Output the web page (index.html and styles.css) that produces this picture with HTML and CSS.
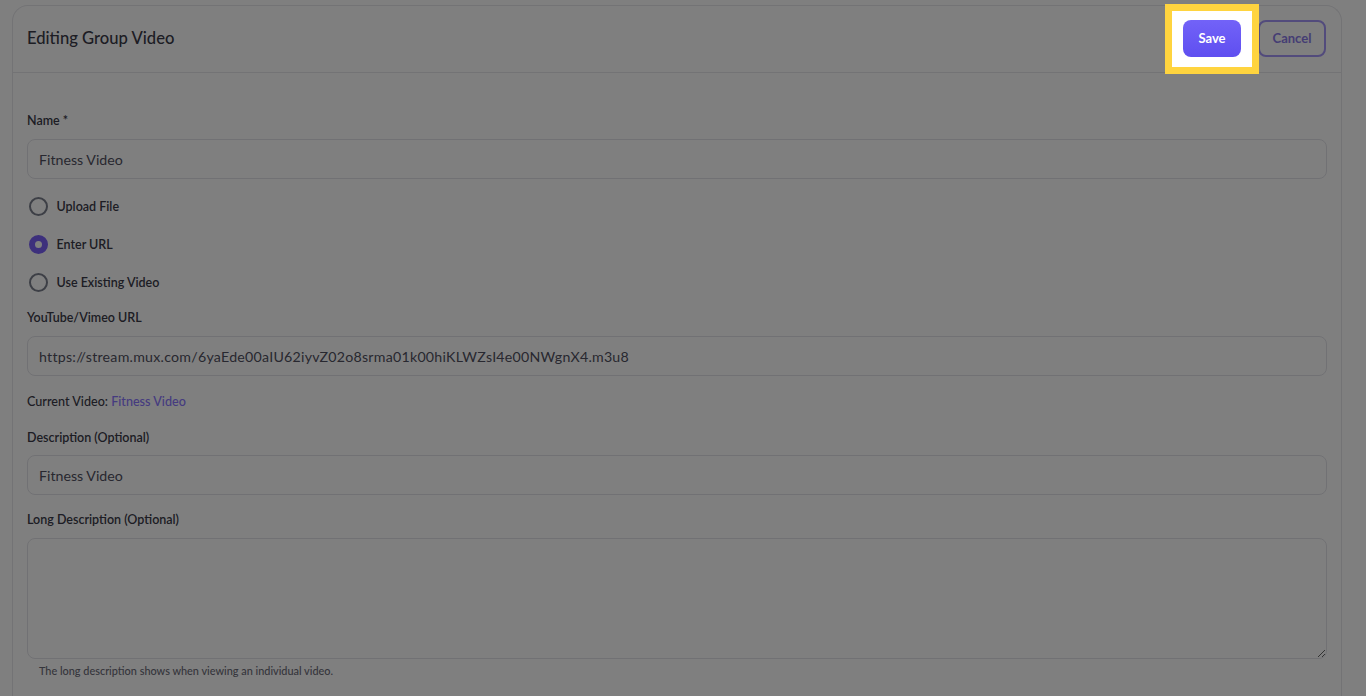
FILE: index.html
```html
<!DOCTYPE html>
<html lang="en">
<head>
<meta charset="utf-8">
<title>Editing Group Video</title>
<link rel="stylesheet" href="styles.css">
</head>
<body>
<div class="page">
  <section class="card">
    <header class="card-header">
      <h1 class="title">Editing Group Video</h1>
      <div class="actions">
        <span class="spotlight"><button class="btn btn-primary" type="button">Save</button></span>
        <button class="btn btn-outline" type="button">Cancel</button>
      </div>
    </header>
    <div class="card-body">
      <div class="field">
        <label class="label">Name *</label>
        <div class="input">Fitness Video</div>
      </div>
      <div class="radios">
        <div class="radio"><span class="dot"></span><span>Upload File</span></div>
        <div class="radio"><span class="dot checked"></span><span>Enter URL</span></div>
        <div class="radio"><span class="dot"></span><span>Use Existing Video</span></div>
      </div>
      <div class="field url-field">
        <label class="label">YouTube/Vimeo URL</label>
        <div class="input">https://stream.mux.com/6yaEde00aIU62iyvZ02o8srma01k00hiKLWZsI4e00NWgnX4.m3u8</div>
      </div>
      <p class="current">Current Video: <a class="link">Fitness Video</a></p>
      <div class="field desc-field">
        <label class="label">Description (Optional)</label>
        <div class="input">Fitness Video</div>
      </div>
      <div class="field long-field">
        <label class="label">Long Description (Optional)</label>
        <textarea class="textarea"></textarea>
        <p class="help">The long description shows when viewing an individual video.</p>
      </div>
    </div>
  </section>
</div>
<div class="dim"></div>
</body>
</html>
```
FILE: styles.css
```css
* { box-sizing: border-box; }
html, body { margin: 0; padding: 0; height: 100%; overflow: hidden; }
body {
  background: #ffffff;
  font-family: "Lato", "Noto Sans", sans-serif;
  color: #3a3a48;
}
.page {
  padding: 5px 24px 0 12px;
}
.card {
  border: 1px solid #e6e6ea;
  border-bottom: none;
  border-radius: 16px 16px 0 0;
  background: #fff;
  height: 720px;
}
.card-header {
  height: 67px;
  display: flex;
  align-items: center;
  justify-content: space-between;
  padding: 0 15px 0 14px;
  border-bottom: 1px solid #e6e6ea;
}
.title {
  margin: 0 0 3px 0;
  font-size: 16.6px;
  font-weight: 500;
  color: #3a3a48;
}
.actions {
  display: flex;
  align-items: center;
  gap: 17px;
  margin-bottom: 2px;
}
.btn {
  font-family: inherit;
  font-size: 13px;
  font-weight: 700;
  height: 37px;
  border-radius: 8px;
  cursor: pointer;
}
.btn-primary {
  width: 58px;
  border: none;
  color: #fff;
  background: linear-gradient(180deg, #7262f8 0%, #5f4ff0 100%);
  position: relative;
}
.btn-outline {
  width: 68px;
  background: #fff;
  border: 2px solid #a596f8;
  color: #8a7ae8;
}
.spotlight {
  position: relative;
  z-index: 20;
  display: inline-flex;
}
.spotlight::before {
  content: "";
  position: absolute;
  left: -18px;
  right: -18px;
  top: -16px;
  bottom: -17px;
  border: 7px solid #ffd43f;
  background: #fff;
  z-index: -1;
}
.card-body {
  padding: 39px 14px 0 14px;
}
.label {
  display: block;
  font-size: 12.5px;
  line-height: 18px;
  font-weight: 600;
  color: #3a3a48;
  margin-bottom: 9px;
}
.input {
  height: 40px;
  border: 1px solid #e3e3e8;
  border-radius: 8px;
  padding: 0 11px;
  display: flex;
  align-items: center;
  font-size: 14.2px;
  color: #505060;
}
.radios {
  display: flex;
  flex-direction: column;
  gap: 20px;
  margin-top: 18px;
}
.radio {
  display: flex;
  align-items: center;
  gap: 9px;
  height: 18px;
  font-size: 12.5px;
  font-weight: 600;
  color: #3a3a48;
}
.dot {
  width: 19px;
  height: 19px;
  margin-left: 1.5px;
  border-radius: 50%;
  border: 2px solid #7a7f8c;
  background: #fff;
}
.dot.checked {
  border: 6px solid #7a60f8;
  background: #fff;
}
.url-field {
  margin-top: 18px;
}
.url-field .input {
  letter-spacing: 0.25px;
}
.current {
  margin: 18px 0 0 0;
  font-size: 12.6px;
  line-height: 16px;
  font-weight: 500;
  color: #3a3a48;
}
.link {
  color: #8a76ff;
}
.desc-field {
  margin-top: 19px;
}
.desc-field .label {
  margin-bottom: 8px;
}
.long-field {
  margin-top: 16px;
}
.long-field .label {
  margin-bottom: 9px;
}
.textarea {
  display: block;
  width: 100%;
  height: 121px;
  border: 1px solid #e3e3e8;
  border-radius: 8px;
  background: #fff;
  resize: vertical;
  font-family: inherit;
}
.help {
  margin: 5px 0 0 12px;
  font-size: 10.9px;
  line-height: 14px;
  font-weight: 500;
  color: #6b6b78;
}
.dim {
  position: fixed;
  inset: 0;
  background: rgba(0, 0, 0, 0.5);
  z-index: 10;
}
```
